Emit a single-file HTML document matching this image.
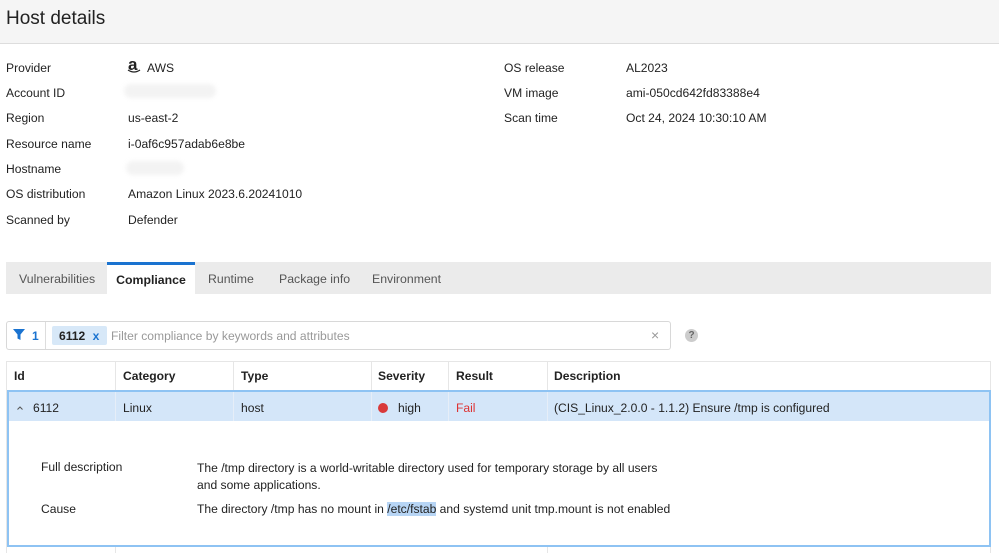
<!DOCTYPE html>
<html><head><style>
*{box-sizing:border-box;margin:0;padding:0}
body{width:999px;height:553px;overflow:hidden;background:#fff;font-family:"Liberation Sans",sans-serif;font-size:12.1px;color:#222;position:relative}
.a{position:absolute;white-space:nowrap}
.hdr{position:absolute;left:0;top:0;width:999px;height:44px;background:#f5f5f5;border-bottom:1px solid #ddd}
.blur{position:absolute;background:#f3f3f3;border-radius:8px;filter:blur(2px)}
.tabs{position:absolute;left:6px;top:262px;width:985px;height:32px;background:#ebebeb}
.tab{position:absolute;top:0;height:32px;line-height:35px;color:#555;font-size:12.3px}
</style></head><body>
<div class="hdr"><div class="a" style="left:6px;top:8px;font-size:19px;color:#222">Host details</div></div>

<div class="a" style="left:6px;top:61px">Provider</div>
<div class="a" style="left:128px;top:55px;font-weight:bold;font-size:17px">a</div>
<svg class="a" style="left:127px;top:69px" width="14" height="5"><path d="M1 1 Q7 5 13 1" stroke="#222" stroke-width="1.3" fill="none"/></svg>
<div class="a" style="left:147px;top:61px">AWS</div>
<div class="a" style="left:6px;top:86px">Account ID</div>
<div class="blur" style="left:124px;top:84px;width:92px;height:14px"></div>
<div class="a" style="left:6px;top:111px">Region</div><div class="a" style="left:128px;top:111px">us-east-2</div>
<div class="a" style="left:6px;top:137px">Resource name</div><div class="a" style="left:128px;top:137px">i-0af6c957adab6e8be</div>
<div class="a" style="left:6px;top:162px">Hostname</div>
<div class="blur" style="left:126px;top:161px;width:58px;height:14px"></div>
<div class="a" style="left:6px;top:187px">OS distribution</div><div class="a" style="left:128px;top:187px">Amazon Linux 2023.6.20241010</div>
<div class="a" style="left:6px;top:213px">Scanned by</div><div class="a" style="left:128px;top:213px">Defender</div>

<div class="a" style="left:504px;top:61px">OS release</div><div class="a" style="left:626px;top:61px">AL2023</div>
<div class="a" style="left:504px;top:86px">VM image</div><div class="a" style="left:626px;top:86px">ami-050cd642fd83388e4</div>
<div class="a" style="left:504px;top:111px">Scan time</div><div class="a" style="left:626px;top:111px">Oct 24, 2024 10:30:10 AM</div>

<div class="tabs">
<div class="tab" style="left:13px">Vulnerabilities</div>
<div class="tab" style="left:101px;width:88px;background:#fff;border-top:3px solid #1a73d0;line-height:31px;text-align:center;color:#222;font-weight:bold">Compliance</div>
<div class="tab" style="left:202px">Runtime</div>
<div class="tab" style="left:273px">Package info</div>
<div class="tab" style="left:366px">Environment</div>
</div>

<div class="a" style="left:6px;top:321px;width:665px;height:29px;border:1px solid #d8d8d8;border-radius:3px"></div>
<div class="a" style="left:45px;top:322px;width:1px;height:27px;background:#ddd"></div>
<svg class="a" style="left:13px;top:329px" width="13" height="12"><path d="M0 0H12L7.5 5.5V11L4.5 9.5V5.5Z" fill="#1a73d0"/></svg>
<div class="a" style="left:32px;top:329px;color:#1a73d0;font-weight:bold">1</div>
<div class="a" style="left:52px;top:326px;width:55px;height:19px;background:#d7e8f8;border-radius:2px"></div>
<div class="a" style="left:59px;top:329px;font-weight:bold">6112 <span style="color:#1a73d0;margin-left:4px">x</span></div>
<div class="a" style="left:111px;top:329px;color:#999">Filter compliance by keywords and attributes</div>
<div class="a" style="left:651px;top:327px;color:#999;font-size:14px">×</div>
<div class="a" style="left:685px;top:329px;width:13px;height:13px;border-radius:50%;background:#ccc;color:#666;font-size:10px;font-weight:bold;text-align:center;line-height:13px">?</div>

<div class="a" style="left:6px;top:361px;width:985px;height:192px;border:1px solid #e6e6e6;border-bottom:none"></div>
<div class="a" style="left:115px;top:361px;width:1px;height:30px;background:#e6e6e6"></div>
<div class="a" style="left:233px;top:361px;width:1px;height:30px;background:#e6e6e6"></div>
<div class="a" style="left:371px;top:361px;width:1px;height:30px;background:#e6e6e6"></div>
<div class="a" style="left:448px;top:361px;width:1px;height:30px;background:#e6e6e6"></div>
<div class="a" style="left:547px;top:361px;width:1px;height:30px;background:#e6e6e6"></div>
<div class="a" style="left:14px;top:369px;font-weight:bold">Id</div>
<div class="a" style="left:123px;top:369px;font-weight:bold">Category</div>
<div class="a" style="left:241px;top:369px;font-weight:bold">Type</div>
<div class="a" style="left:378px;top:369px;font-weight:bold">Severity</div>
<div class="a" style="left:456px;top:369px;font-weight:bold">Result</div>
<div class="a" style="left:554px;top:369px;font-weight:bold">Description</div>

<div class="a" style="left:7px;top:390px;width:984px;height:157px;border:2px solid #8ec3f3;background:#fff"></div>
<div class="a" style="left:9px;top:392px;width:980px;height:29px;background:#d4e6f9"></div>
<div class="a" style="left:115px;top:392px;width:1px;height:29px;background:#e6eef8"></div>
<div class="a" style="left:233px;top:392px;width:1px;height:29px;background:#e6eef8"></div>
<div class="a" style="left:371px;top:392px;width:1px;height:29px;background:#e6eef8"></div>
<div class="a" style="left:448px;top:392px;width:1px;height:29px;background:#e6eef8"></div>
<div class="a" style="left:547px;top:392px;width:1px;height:29px;background:#e6eef8"></div>
<svg class="a" style="left:17px;top:406px" width="6" height="4"><path d="M0.5 3.5L3 1L5.5 3.5" stroke="#555" fill="none"/></svg>
<div class="a" style="left:33px;top:401px">6112</div>
<div class="a" style="left:123px;top:401px">Linux</div>
<div class="a" style="left:241px;top:401px">host</div>
<div class="a" style="left:378px;top:403px;width:10px;height:10px;border-radius:50%;background:#d93a3a"></div>
<div class="a" style="left:398px;top:401px">high</div>
<div class="a" style="left:456px;top:401px;color:#d33">Fail</div>
<div class="a" style="left:554px;top:401px">(CIS_Linux_2.0.0 - 1.1.2) Ensure /tmp is configured</div>

<div class="a" style="left:41px;top:460px">Full description</div>
<div class="a" style="left:197px;top:460px;line-height:17px">The /tmp directory is a world-writable directory used for temporary storage by all users<br>and some applications.</div>
<div class="a" style="left:41px;top:502px">Cause</div>
<div class="a" style="left:197px;top:502px">The directory /tmp has no mount in <span style="background:#b7d5f5">/etc/fstab</span> and systemd unit tmp.mount is not enabled</div>
<div class="a" style="left:115px;top:547px;width:1px;height:6px;background:#e6e6e6"></div>
<div class="a" style="left:547px;top:547px;width:1px;height:6px;background:#e6e6e6"></div>
</body></html>
